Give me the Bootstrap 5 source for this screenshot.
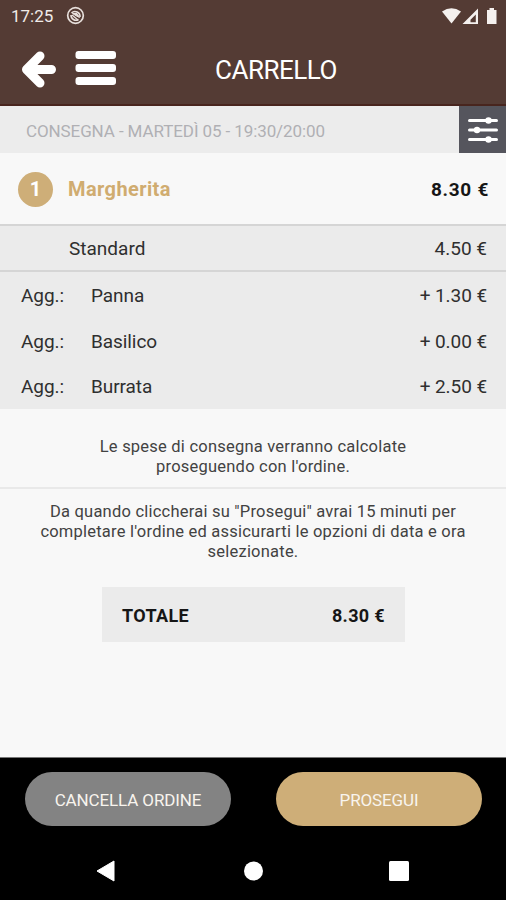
<!DOCTYPE html>
<html lang="it">
<head>
<meta charset="utf-8">
<meta name="viewport" content="width=device-width, initial-scale=1">
<title>Carrello</title>
<link href="https://cdn.jsdelivr.net/npm/bootstrap@5.3.0/dist/css/bootstrap.min.css" rel="stylesheet">
<style>
body{font-family:Roboto,"Liberation Sans",sans-serif;background:#f8f8f8;color:#2f2f2f;height:900px;overflow:hidden;line-height:1.2}
svg{display:block;flex:none}
.top-area{background:#543b34;height:106px;border-bottom:2px solid #48251e}
.status-row{height:32px;padding:0 8px 0 11px;color:#f0ebe8;font-size:17px}
.title-row{height:74px;padding-left:21px;display:grid;grid-template-columns:194px 1fr;align-items:center}
.page-title{font-size:26px;letter-spacing:-.5px;color:#fff;font-weight:400;line-height:1;padding-top:1px}
.slot-row{height:47px;background:#ececec;color:#b0b0b4;font-size:17px}
.slot-text{padding:3px 0 0 26px;letter-spacing:-.1px}
.filter-btn{width:47px;background:#55555d;border:0;border-radius:0}
.item-row{height:71px;padding:1px 17px 0 18px;font-size:20px}
.qty{width:35px;height:35px;background:#ceae78;color:#fff;margin-right:15px;font-weight:700}
.item-name{color:#d0ac70;font-weight:700;letter-spacing:.4px}
.amount{font-weight:700;color:#161616;font-size:19px;letter-spacing:.7px;padding-top:2px}
.base-row{height:48px;background:#ebebeb;border-top:2px solid #d5d5d5;border-bottom:2px solid #d5d5d5;padding:2px 19px 0 69px;font-size:19px}
.extras{background:#ebebeb;height:137px;padding:2px 19px 0 21px;font-size:19px}
.extra-row{height:45.5px;letter-spacing:-.07px}
.extra-tag{width:70px}
.msg{font-size:16.5px;line-height:20px;color:#424242;letter-spacing:.22px}
.msg-fees{height:80px;padding-top:28px;border-bottom:2px solid #e9e9e9}
.msg-time{padding-top:13px}
.total-box{width:303px;height:55px;margin:25px 0 0 102px;padding:0 20px;background:#ebebeb}
.total-box .amount{font-size:18px;letter-spacing:.35px;padding-top:3px}
.bottom-area{background:#000;height:143px;border-top:1px solid #777}
.actions{padding:14px 24px 0 25px}
.pill-btn{width:206px;height:54px;border:0;border-radius:27px;color:#f8f4ee;font-size:17px;letter-spacing:-.12px;padding:3px 0 0}
.pill-gray{background:#838383}.pill-gold{background:#ceae78}
.pill-btn:hover{color:#fff}
.sys-nav{padding:34px 97px 0 96px}
</style>
</head>
<body class="d-flex flex-column">
<header class="top-area flex-shrink-0">
  <div class="status-row d-flex align-items-center justify-content-between">
    <div class="d-flex align-items-center">
      <span id="clock">17:25</span>
      <svg class="ms-2" width="28" height="20" viewBox="0 0 28 20" fill="none" stroke="#e8e0dc"><circle cx="14.500" cy="9.500" r="7.800" stroke-width="1.700"/><path d="M10.500 7A5 5 0 0 1 19 11M17.500 13.500A5 5 0 0 1 10 9" stroke-width="1.600"/><path d="M11.500 7.500h4.500l2.500 4-3-1.500z" fill="#e8e0dc" stroke-width="1"/><path d="M11 9l6 5" stroke-width="1.300"/></svg>
    </div>
    <svg width="56" height="20" viewBox="0 0 56 20" fill="#f5f1ef"><path d="M0 5.500Q9.500-1 19 5.500L9.500 17.500z"/><path fill-rule="evenodd" d="M20.500 18L36 2.500V18zM28.500 16.200h5.300V8.500l-5.300 5.300z"/><path d="M45 4h2.500V2h4.500v2h2.500v14H45z"/></svg>
  </div>
  <div class="title-row">
    <div class="d-flex align-items-center">
      <svg width="35" height="40" viewBox="0 0 35 40" fill="none" stroke="#fff" stroke-width="9" stroke-linecap="round" stroke-linejoin="round"><path d="M19 7L5.500 20.500 19 34M7 20.500h23.500"/></svg>
      <svg width="62" height="40" viewBox="0 0 62 40" fill="#fff"><rect x="19.500" y="2" width="40.500" height="8" rx="3"/><rect x="19.500" y="15" width="40.500" height="8" rx="3"/><rect x="19.500" y="28" width="40.500" height="8" rx="3"/></svg>
    </div>
    <h1 class="page-title mb-0"><span>CARRELLO</span></h1>
  </div>
</header>
<main class="flex-grow-1">
  <div class="slot-row d-flex justify-content-between align-items-stretch">
    <span class="slot-text d-flex align-items-center">CONSEGNA - MARTEDÌ 05 - 19:30/20:00</span>
    <button class="filter-btn d-flex align-items-center justify-content-center p-0" aria-label="Opzioni">
      <svg width="30" height="26" viewBox="0 0 30 26" fill="#fff"><rect y="2" width="30" height="3" rx="1.500"/><rect y="11.500" width="30" height="3" rx="1.500"/><rect y="21" width="30" height="3" rx="1.500"/><circle cx="20.500" cy="3.500" r="3.200"/><circle cx="9" cy="13" r="3.200"/><circle cx="20.500" cy="22.500" r="3.200"/></svg>
    </button>
  </div>
  <div class="item-row d-flex align-items-center">
    <span class="qty rounded-circle d-flex align-items-center justify-content-center">1</span>
    <span class="item-name">Margherita</span>
    <span class="amount ms-auto">8.30 €</span>
  </div>
  <div class="base-row d-flex align-items-center justify-content-between"><span>Standard</span><span>4.50 €</span></div>
  <div class="extras">
    <div class="extra-row d-flex align-items-center"><span class="extra-tag">Agg.:</span><span>Panna</span><span class="ms-auto">+ 1.30 €</span></div>
    <div class="extra-row d-flex align-items-center"><span class="extra-tag">Agg.:</span><span>Basilico</span><span class="ms-auto">+ 0.00 €</span></div>
    <div class="extra-row d-flex align-items-center"><span class="extra-tag">Agg.:</span><span>Burrata</span><span class="ms-auto">+ 2.50 €</span></div>
  </div>
  <p class="msg msg-fees text-center mb-0">Le spese di consegna verranno calcolate<br>proseguendo con l'ordine.</p>
  <p class="msg msg-time text-center mb-0">Da quando cliccherai su "Prosegui" avrai 15 minuti per<br>completare l'ordine ed assicurarti le opzioni di data e ora<br>selezionate.</p>
  <div class="total-box d-flex align-items-center justify-content-between"><span class="amount">TOTALE</span><span class="amount">8.30 €</span></div>
</main>
<footer class="bottom-area flex-shrink-0">
  <div class="actions d-flex justify-content-between">
    <button class="btn pill-btn pill-gray">CANCELLA ORDINE</button>
    <button class="btn pill-btn pill-gold">PROSEGUI</button>
  </div>
  <div class="sys-nav d-flex align-items-center justify-content-between">
    <svg width="20" height="22" viewBox="0 0 20 22" fill="#fff"><path d="M1 11L18 1v20z" stroke="#fff" stroke-linejoin="round"/></svg>
    <svg width="20" height="20" viewBox="0 0 20 20" fill="#fff"><circle cx="10.500" cy="10" r="9.500"/></svg>
    <svg width="20" height="20" viewBox="0 0 20 20" fill="#fff"><rect width="20" height="20" rx="1.500"/></svg>
  </div>
</footer>
<script src="https://cdn.jsdelivr.net/npm/bootstrap@5.3.0/dist/js/bootstrap.bundle.min.js"></script>
</body>
</html>
